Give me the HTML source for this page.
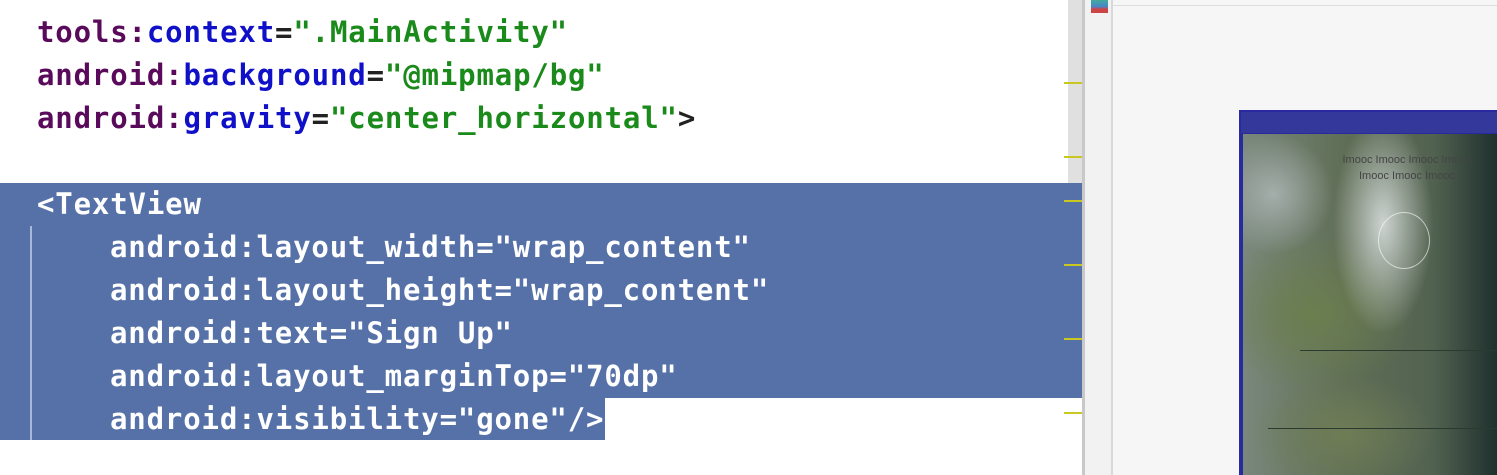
<!DOCTYPE html>
<html><head><style>
body{margin:0;width:1497px;height:475px;overflow:hidden;background:#fff;position:relative;font-family:"DejaVu Sans Mono","Liberation Mono",monospace;}
.l{position:absolute;left:37px;font-size:29px;font-weight:bold;white-space:pre;line-height:43px;height:43px;letter-spacing:0.85px}
.p{color:#5a0a5a}.b{color:#1010c8}.g{color:#1a8a1a}.k{color:#222}
.w{color:#fff}
</style></head><body>
<div style="position:absolute;left:0;top:183px;width:1083px;height:215px;background:#5571a8"></div>
<div style="position:absolute;left:0;top:398px;width:605px;height:42px;background:#5571a8"></div>
<div style="position:absolute;left:30px;top:226px;width:2px;height:214px;background:#a8b8d8"></div>

<div class="l" style="top:-35px"><span class="p">android:</span><span class="b">orientation</span>=<span class="g">"vertical"</span></div>
<div class="l" style="top:11px"><span class="p">tools:</span><span class="b">context</span><span class="k">=</span><span class="g">".MainActivity"</span></div>
<div class="l" style="top:54px"><span class="p">android:</span><span class="b">background</span><span class="k">=</span><span class="g">"@mipmap/bg"</span></div>
<div class="l" style="top:97px"><span class="p">android:</span><span class="b">gravity</span><span class="k">=</span><span class="g">"center_horizontal"</span><span class="k">&gt;</span></div>

<div class="l w" style="top:183px">&lt;TextView</div>
<div class="l w" style="top:226px;left:110px">android:layout_width="wrap_content"</div>
<div class="l w" style="top:269px;left:110px">android:layout_height="wrap_content"</div>
<div class="l w" style="top:312px;left:110px">android:text="Sign Up"</div>
<div class="l w" style="top:355px;left:110px">android:layout_marginTop="70dp"</div>
<div class="l w" style="top:398px;left:110px">android:visibility="gone"/&gt;</div>

<div style="position:absolute;left:1068px;top:0;width:15px;height:183px;background:#e0e0e0"></div>
<div style="position:absolute;left:1082px;top:0;width:3px;height:475px;background:#c8c8c8"></div>
<div style="position:absolute;left:1085px;top:0;width:27px;height:475px;background:#f2f2f2"></div>
<div style="position:absolute;left:1111px;top:0;width:2px;height:475px;background:#d8d8d8"></div>
<div style="position:absolute;left:1113px;top:0;width:384px;height:475px;background:#f6f6f6"></div>
<div style="position:absolute;left:1113px;top:5px;width:384px;height:1px;background:#ddd"></div>
<div style="position:absolute;left:1091px;top:0;width:17px;height:13px;background:linear-gradient(#4a9 0,#48c 50%,#c44 70%)"></div>
<div style="position:absolute;left:1064px;top:82px;width:18px;height:2px;background:#c8c820"></div>
<div style="position:absolute;left:1064px;top:156px;width:18px;height:2px;background:#c8c820"></div>
<div style="position:absolute;left:1064px;top:200px;width:18px;height:2px;background:#c8c820"></div>
<div style="position:absolute;left:1064px;top:264px;width:18px;height:2px;background:#c8c820"></div>
<div style="position:absolute;left:1064px;top:338px;width:18px;height:2px;background:#c8c820"></div>
<div style="position:absolute;left:1064px;top:412px;width:18px;height:2px;background:#c8c820"></div>

<div style="position:absolute;left:1239px;top:110px;width:258px;height:365px;background:#2a2aa0"></div>
<div style="position:absolute;left:1241px;top:112px;width:256px;height:21px;background:#34389a"></div>
<div style="position:absolute;left:1243px;top:134px;width:254px;height:341px;background:
radial-gradient(ellipse 50px 110px at 140px 90px,rgba(225,230,230,.85),rgba(200,205,205,0) 100%),
radial-gradient(ellipse 60px 60px at 30px 60px,#a4aeab,rgba(150,160,155,0)),
radial-gradient(ellipse 100px 80px at 70px 180px,#6b7e4e,rgba(90,110,70,0)),
radial-gradient(ellipse 90px 60px at 100px 300px,#6e7d55,rgba(90,110,70,0)),
linear-gradient(90deg,#7a887c,#5f6e56 40%,#526250 75%,#1f302e 100%);"></div>
<div style="position:absolute;left:1300px;top:350px;width:197px;height:1px;background:#2a3a30"></div>
<div style="position:absolute;left:1268px;top:428px;width:229px;height:1px;background:#2a3a30"></div>
<div style="position:absolute;left:1332px;top:152px;width:150px;font:11px 'Liberation Sans',sans-serif;color:#444;text-align:center;line-height:16px">Imooc Imooc Imooc Imooc<br>Imooc Imooc Imooc</div>
<div style="position:absolute;left:1378px;top:212px;width:50px;height:55px;border-radius:50%;border:1px solid rgba(255,255,255,.6)"></div>
</body></html>
